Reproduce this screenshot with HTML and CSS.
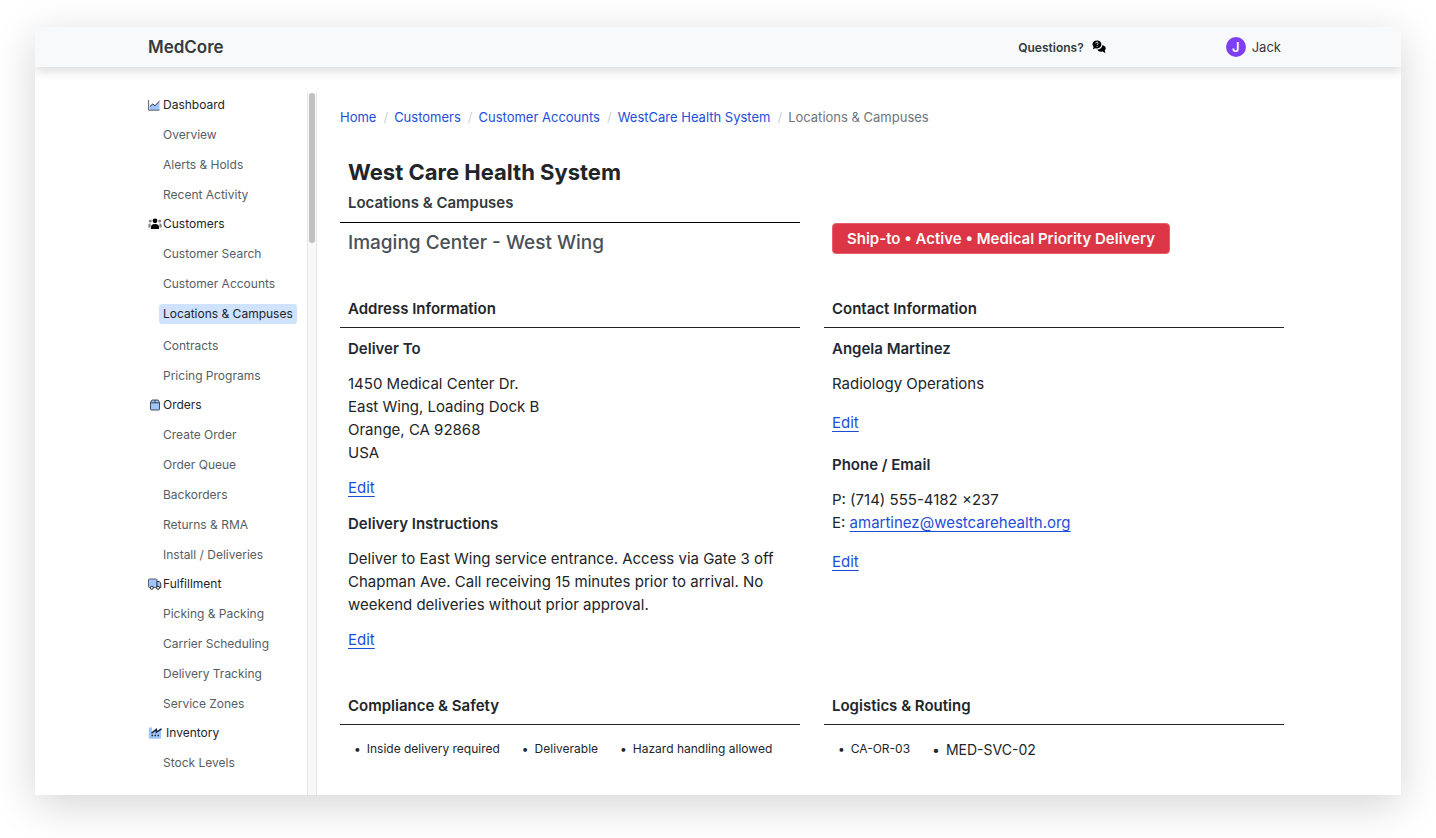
FILE: index.html
```html
<!DOCTYPE html>
<html lang="en">
<head>
    <meta charset="UTF-8">
    <meta name="viewport" content="width=device-width, initial-scale=1.0">
    <title>MedCore - Locations &amp; Campuses</title>
    <link rel="stylesheet" href="styles.css">
</head>
<body>
    <div class="app">
        <header class="topbar">
            <a class="brand" href="#">MedCore</a>
            <div class="topbar-right">
                <a class="questions" href="#">Questions?
                    <svg width="14" height="14" viewBox="0 0 14 14" aria-hidden="true">
                        <path d="M4.9 .4C2.3 .4 .5 2 .5 4.3c0 1.100.4 2 1.100 2.700L1 9.200l2.300-1c.5.2 1 .2 1.600.2 2.600 0 4.500-1.800 4.500-4.100S7.500.4 4.900.4z" fill="#000"/>
                        <path d="M10.200 5.200c0 2.400-2 4.200-4.900 4.400.7 1.400 2.100 2.200 3.900 2.200.6 0 1.100-.1 1.600-.2l2.600 1.600-.6-2.600c.6-.7.9-1.500.9-2.400 0-1.700-1.400-2.900-3.500-3z" fill="#000"/>
                        <path d="M3.700 3.300c0-1.600 2.500-1.500 2.500-.1 0 .9-1.200 1-1.200 1.900M5 6.100v.8" fill="none" stroke="#f8f9fb" stroke-width=".9"/>
                    </svg>
                </a>
                <a class="user" href="#"><span class="avatar">J</span>Jack</a>
            </div>
        </header>

        <div class="layout">
            <aside class="sidebar">
                <nav class="nav">
                    <h2 class="nav-title">
                        <svg width="14" height="14" viewBox="0 0 14 14" aria-hidden="true">
                            <path d="M1.500 8.500L4.500 6l2.500 2 4.500-4.500V12h-10z" fill="#9ec5fe"/>
                            <path d="M.6 2v10.200h11" fill="none" stroke="#495057" stroke-width=".9"/>
                            <path d="M2 8.500L4.700 6l2.200 1.700 4.600-4.500" fill="none" stroke="#212529"/>
                        </svg>
                        Dashboard
                    </h2>
                    <ul>
                        <li><a href="#">Overview</a></li>
                        <li><a href="#">Alerts &amp; Holds</a></li>
                        <li><a href="#">Recent Activity</a></li>
                    </ul>
                    <h2 class="nav-title">
                        <svg width="14" height="14" viewBox="0 0 14 14" aria-hidden="true">
                            <g fill="#868686">
                                <circle cx="2.300" cy="4" r="1.500"/>
                                <circle cx="11.700" cy="4" r="1.500"/>
                                <path d="M.3 10.500V8.300c0-1.300.8-1.900 2.300-1.900V10.500zM13.700 10.500V8.300c0-1.300-.8-1.900-2.300-1.900V10.500z"/>
                            </g>
                            <circle cx="7" cy="3.800" r="2.400" fill="#000"/>
                            <path d="M3 12v-1.800C3 8 4.300 6.900 7 6.900s4 1.100 4 3.300V12z" fill="#000"/>
                        </svg>
                        Customers
                    </h2>
                    <ul>
                        <li><a href="#">Customer Search</a></li>
                        <li><a href="#">Customer Accounts</a></li>
                        <li class="active"><a href="#" aria-current="page">Locations &amp; Campuses</a></li>
                        <li><a href="#">Contracts</a></li>
                        <li><a href="#">Pricing Programs</a></li>
                    </ul>
                    <h2 class="nav-title">
                        <svg width="14" height="14" viewBox="0 0 14 14" aria-hidden="true">
                            <path d="M2.500 4.500L4 2h6l1.500 2.500v6.500q0 1-1 1h-7q-1 0-1-1z" fill="#9ec5fe" stroke="#343a40" stroke-width=".9"/>
                            <path d="M2.500 4.800h9M7 2v2.800" stroke="#343a40" stroke-width=".9"/>
                        </svg>
                        Orders
                    </h2>
                    <ul>
                        <li><a href="#">Create Order</a></li>
                        <li><a href="#">Order Queue</a></li>
                        <li><a href="#">Backorders</a></li>
                        <li><a href="#">Returns &amp; RMA</a></li>
                        <li><a href="#">Install / Deliveries</a></li>
                    </ul>
                    <h2 class="nav-title">
                        <svg width="14" height="14" viewBox="0 0 14 14" aria-hidden="true">
                            <path d="M.5 3q0-1 1-1h6.500q1 0 1 1v7.500H1.500q-1 0-1-1z" fill="#9ec5fe" stroke="#495057" stroke-width=".9"/>
                            <path d="M9 4.500h2q.6 0 1 .6l.8 1.900v3.500H9z" fill="#9ec5fe" stroke="#343a40"/>
                            <circle cx="3.800" cy="10.800" r="1.500" fill="#fff" stroke="#212529"/>
                            <circle cx="10" cy="10.800" r="1.500" fill="#fff" stroke="#212529"/>
                        </svg>
                        Fulfillment
                    </h2>
                    <ul>
                        <li><a href="#">Picking &amp; Packing</a></li>
                        <li><a href="#">Carrier Scheduling</a></li>
                        <li><a href="#">Delivery Tracking</a></li>
                        <li><a href="#">Service Zones</a></li>
                    </ul>
                    <h2 class="nav-title inventory">
                        <svg width="14" height="14" viewBox="0 0 14 14" aria-hidden="true">
                            <path d="M.8 1.500H4V5l4-2v2l5-3V12.800H.8z" fill="#9ec5fe"/>
                            <path d="M3.500 7.300L8.300 3.500v2.800L13.600 2.800" fill="none" stroke="#212529" stroke-width="1.400"/>
                            <path d="M3.500 9.500H5M6.500 9.500H8M9.500 9.500H11" stroke="#212529" stroke-width="1.400"/>
                        </svg>
                        Inventory
                    </h2>
                    <ul>
                        <li><a href="#">Stock Levels</a></li>
                    </ul>
                </nav>
                <div class="scrollbar"><div class="thumb"></div></div>
            </aside>

            <main class="content">
                <ol class="breadcrumb">
                    <li><a href="#">Home</a></li>
                    <li><a href="#">Customers</a></li>
                    <li><a href="#">Customer Accounts</a></li>
                    <li><a href="#">WestCare Health System</a></li>
                    <li>Locations &amp; Campuses</li>
                </ol>

                <div class="columns intro">
                    <div>
                        <h1>West Care Health System</h1>
                        <p class="subtitle">Locations &amp; Campuses</p>
                        <h2 class="site-name">Imaging Center - West Wing</h2>
                    </div>
                    <div class="status">
                        <span class="badge">Ship-to • Active • Medical Priority Delivery</span>
                    </div>
                </div>

                <div class="columns">
                    <section>
                        <h3 class="section-title">Address Information</h3>
                        <div class="section-body">
                            <h4>Deliver To</h4>
                            <address>1450 Medical Center Dr.<br>East Wing, Loading Dock B<br>Orange, CA 92868<br>USA</address>
                            <p><a href="#">Edit</a></p>
                            <h4>Delivery Instructions</h4>
                            <p>Deliver to East Wing service entrance. Access via Gate 3 off Chapman Ave. Call receiving 15 minutes prior to arrival. No weekend deliveries without prior approval.</p>
                            <p><a href="#">Edit</a></p>
                        </div>
                    </section>
                    <section>
                        <h3 class="section-title">Contact Information</h3>
                        <div class="section-body contact">
                            <h4>Angela Martinez</h4>
                            <p>Radiology Operations</p>
                            <p class="edit"><a href="#">Edit</a></p>
                            <h4>Phone / Email</h4>
                            <p>P: (714) 555-4182 ×237<br>E: <a href="mailto:amartinez@westcarehealth.org">amartinez@westcarehealth.org</a></p>
                            <p class="edit"><a href="#">Edit</a></p>
                        </div>
                    </section>
                    <section>
                        <h3 class="section-title">Compliance &amp; Safety</h3>
                        <ul class="tags">
                            <li>Inside delivery required</li>
                            <li>Deliverable</li>
                            <li>Hazard handling allowed</li>
                        </ul>
                    </section>
                    <section>
                        <h3 class="section-title">Logistics &amp; Routing</h3>
                        <ul class="tags">
                            <li>CA-OR-03</li>
                            <li class="large">MED-SVC-02</li>
                        </ul>
                    </section>
                </div>
            </main>
        </div>
    </div>
</body>
</html>
```
FILE: styles.css
```css
* {
    box-sizing: border-box;
}
body {
    margin: 0;
    padding: 27px 35px 43px;
    height: 100vh;
    background-color: #fff;
    color: #212529;
    font-family: Inter, "Liberation Sans", sans-serif;
    font-size: 15px;
    line-height: 23px;
}
h1, h2, h3, h4, p, ul, ol, address {
    margin: 0;
    padding: 0;
    font-style: normal;
}
ul, ol {
    list-style: none;
}
a {
    color: #1d4ed8;
}
.app {
    display: flex;
    flex-direction: column;
    height: 100%;
    background-color: #fff;
    box-shadow: 0 10px 40px rgba(0, 0, 0, 0.17);
    overflow: hidden;
}

/* Top bar */
.topbar {
    display: flex;
    flex: none;
    align-items: center;
    justify-content: space-between;
    height: 40px;
    padding: 0 120px 0 113px;
    background-color: #f8f9fb;
    box-shadow: 0 4px 10px rgba(0, 0, 0, 0.14);
}
.topbar a {
    color: #343a40;
    text-decoration: none;
}
.brand {
    font-size: 17px;
    font-weight: 600;
}
.topbar-right {
    display: flex;
    gap: 120px;
}
.questions, .user {
    display: flex;
    align-items: center;
}
.questions {
    gap: 8px;
    font-size: 12px;
    font-weight: 600;
}
.user {
    gap: 6px;
    font-size: 13px;
    font-weight: 400;
}
.avatar {
    width: 20px;
    height: 20px;
    border-radius: 50%;
    background-color: #7e3ff2;
    color: #fff;
    font-weight: 600;
    line-height: 20px;
    text-align: center;
}

/* Sidebar */
.layout {
    display: flex;
    flex: 1;
    gap: 23px;
    min-height: 0;
    padding: 26px 117px 0 113px;
}
.sidebar {
    display: flex;
    flex: none;
    justify-content: space-between;
    width: 169px;
    overflow: hidden;
}
.nav-title {
    display: flex;
    align-items: center;
    gap: 1px;
    margin: 3px 0;
    color: #212529;
    font-size: 12px;
    font-weight: 400;
    line-height: 23px;
}
.nav-title:first-child {
    margin-top: 0;
}
.nav-title.inventory {
    gap: 4px;
}
.nav li {
    padding: 6px 0 4px 11px;
    line-height: 20px;
    white-space: nowrap;
}
.nav li a {
    display: inline-block;
    padding: 0 4px;
    color: #565e64;
    font-size: 12px;
    text-decoration: none;
    vertical-align: top;
}
.nav li.active {
    padding: 6px 0 6px 11px;
}
.nav li.active a {
    border-radius: 3px;
    background-color: #cfe2ff;
    color: #212529;
}
.scrollbar {
    flex: none;
    width: 10px;
    border: 1px solid #e6e6e6;
    border-width: 0 1px;
    background-color: #f8f8f8;
}
.thumb {
    width: 6px;
    height: 150px;
    margin: 0 auto;
    border-radius: 3px;
    background-color: #c1c1c1;
}

/* Main content */
.content {
    flex: 1;
    min-width: 0;
    padding-top: 14px;
}
.breadcrumb {
    display: flex;
    color: #6c757d;
    font-size: 13px;
    line-height: 20px;
}
.breadcrumb a {
    text-decoration: none;
}
.breadcrumb li + li::before {
    content: "/";
    padding: 0 6px 0 7px;
    color: #ced4da;
}
.columns {
    display: grid;
    grid-template-columns: 1fr 1fr;
    gap: 42px 24px;
}
.intro {
    margin: 31px 0 40px;
}
h1 {
    padding: 0 8px;
    font-size: 22px;
    font-weight: 700;
    line-height: 28px;
}
.subtitle {
    padding: 7px 8px 9px;
    border-bottom: 1px solid #000;
    color: #343a40;
    font-size: 15px;
    font-weight: 600;
    line-height: 20px;
}
.site-name {
    padding: 7px 8px 0;
    color: #495057;
    font-size: 19px;
    font-weight: 500;
    line-height: 26px;
}
.status {
    align-self: end;
    padding: 0 8px 2px;
}
.badge {
    display: inline-block;
    padding: 0 14px;
    border: 1px solid #e4606d;
    border-radius: 4px;
    background-color: #dc3545;
    color: #f8f9fa;
    font-size: 15px;
    font-weight: 600;
    line-height: 29px;
    vertical-align: top;
}
.section-title {
    padding: 1px 8px 7px;
    border-bottom: 1px solid #212529;
    font-size: 15px;
    font-weight: 600;
    line-height: 23px;
}
.section-body {
    display: flex;
    flex-direction: column;
    gap: 12px;
    padding: 8px 8px 0;
}
.section-body a {
    text-underline-offset: 3px;
}
.section-body h4 {
    padding-top: 1px;
    color: #1f2933;
    font-size: 15px;
    font-weight: 600;
    line-height: 23px;
}
.contact .edit {
    padding: 4px 0 6px;
}
.tags {
    display: flex;
    gap: 22px;
    padding: 12px 14px 0;
    font-size: 12px;
}
.tags li::before {
    content: "•";
    padding-right: 6px;
}
.tags .large {
    font-size: 14px;
    line-height: 25px;
}
```
